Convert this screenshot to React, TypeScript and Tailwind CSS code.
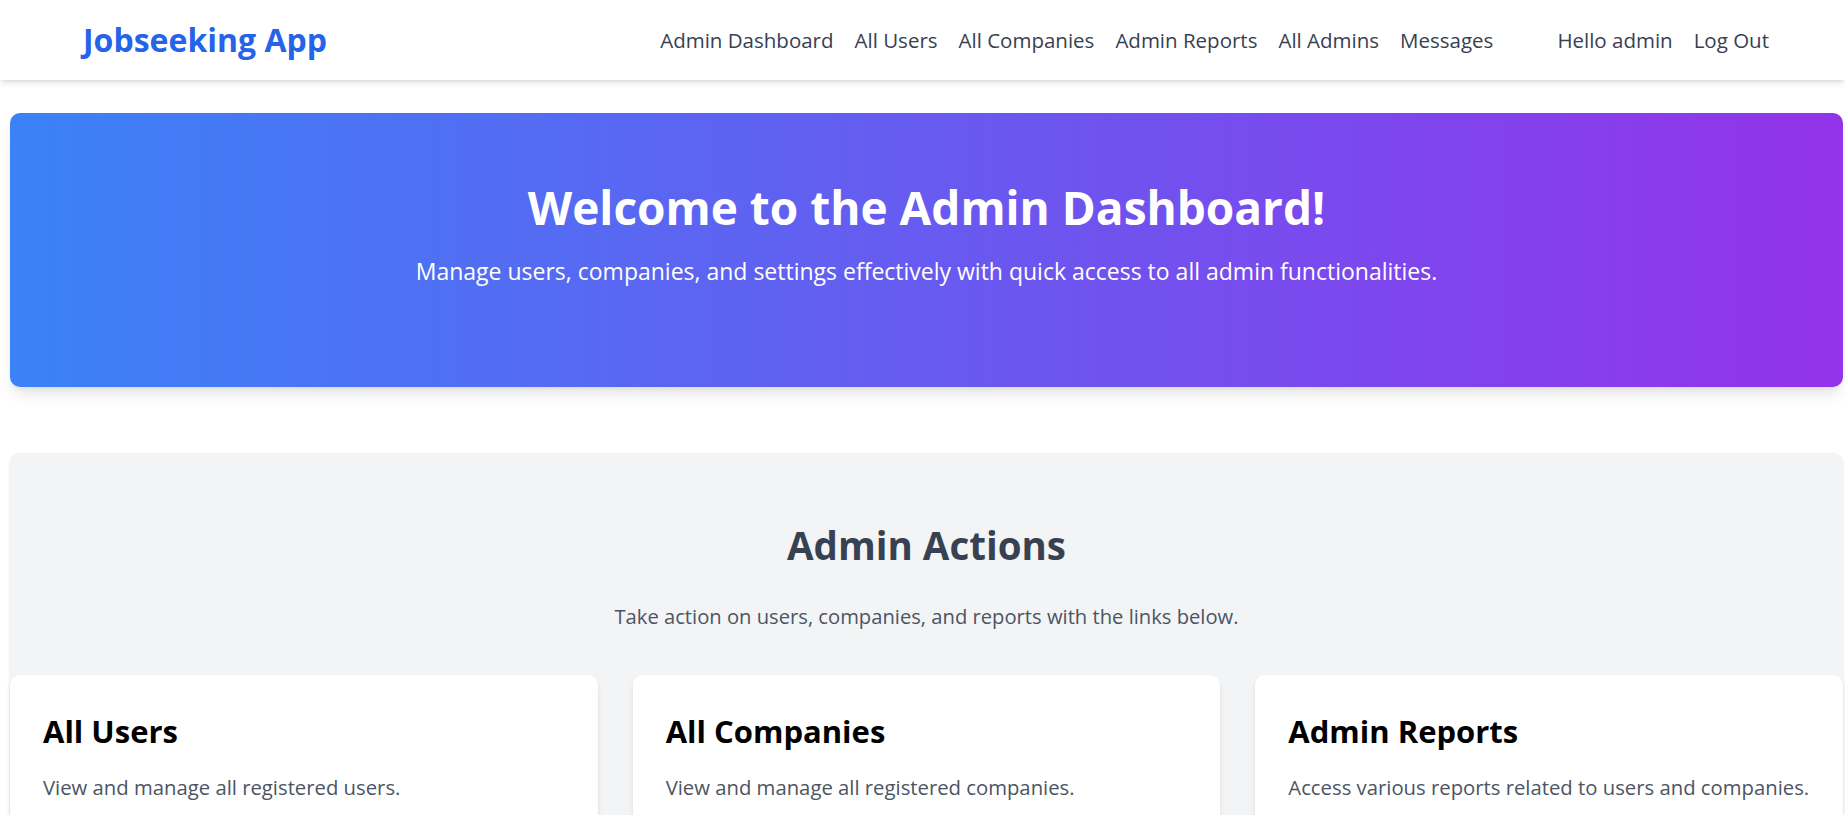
import React from 'react';

const navLinks = ['Admin Dashboard', 'All Users', 'All Companies', 'Admin Reports', 'All Admins', 'Messages'];

const actions = [
  { title: 'All Users', description: 'View and manage all registered users.' },
  { title: 'All Companies', description: 'View and manage all registered companies.' },
  { title: 'Admin Reports', description: 'Access various reports related to users and companies.' },
];

export default function App() {
  return (
    <div className="min-h-screen bg-white font-['Open_Sans',sans-serif]">
      {/* Navbar */}
      <nav className="h-20 bg-white shadow-md flex items-center justify-between pl-[83px] pr-[76px]">
        <a href="#" className="text-[32px] font-bold text-[#2563eb] leading-none">
          Jobseeking App
        </a>
        <div className="flex items-center">
          <div className="flex items-center gap-[21px]">
            {navLinks.map((link) => (
              <a key={link} href="#" className="text-[20.5px] text-[#374151]">
                {link}
              </a>
            ))}
          </div>
          <div className="flex items-center gap-[21px] ml-[64px]">
            <span className="text-[20.5px] text-[#374151]">Hello admin</span>
            <a href="#" className="text-[20.5px] text-[#374151]">Log Out</a>
          </div>
        </div>
      </nav>

      <main className="pl-[10px] pr-[2px] pt-[33px]">
        {/* Hero */}
        <section className="h-[274px] rounded-[10px] shadow-lg bg-[linear-gradient(to_right,#3b82f6,#9333ea)] flex flex-col items-center pt-[66px] text-white">
          <h1 className="text-[46px] leading-[56px] font-bold">Welcome to the Admin Dashboard!</h1>
          <p className="mt-[19px] text-[23px] leading-[34px]">
            Manage users, companies, and settings effectively with quick access to all admin functionalities.
          </p>
        </section>

        {/* Admin actions */}
        <section className="mt-[66px] bg-[#f3f4f6] rounded-[10px] shadow-sm pt-[69px]">
          <h2 className="text-center text-[38.5px] leading-[47px] font-bold text-[#374151]">Admin Actions</h2>
          <p className="mt-[33px] text-center text-[20.2px] leading-[28px] text-[#4b5563]">
            Take action on users, companies, and reports with the links below.
          </p>
          <div className="mt-[45px] grid grid-cols-3 gap-[35px]">
            {actions.map((a) => (
              <div key={a.title} className="bg-white rounded-[10px] shadow-md px-[33px] pt-[38px] pb-[40px]">
                <h3 className="text-[31px] leading-[37px] font-bold text-black">{a.title}</h3>
                <p className="mt-[23px] text-[20.3px] leading-[28px] text-[#4b5563]">{a.description}</p>
              </div>
            ))}
          </div>
        </section>
      </main>
    </div>
  );
}
